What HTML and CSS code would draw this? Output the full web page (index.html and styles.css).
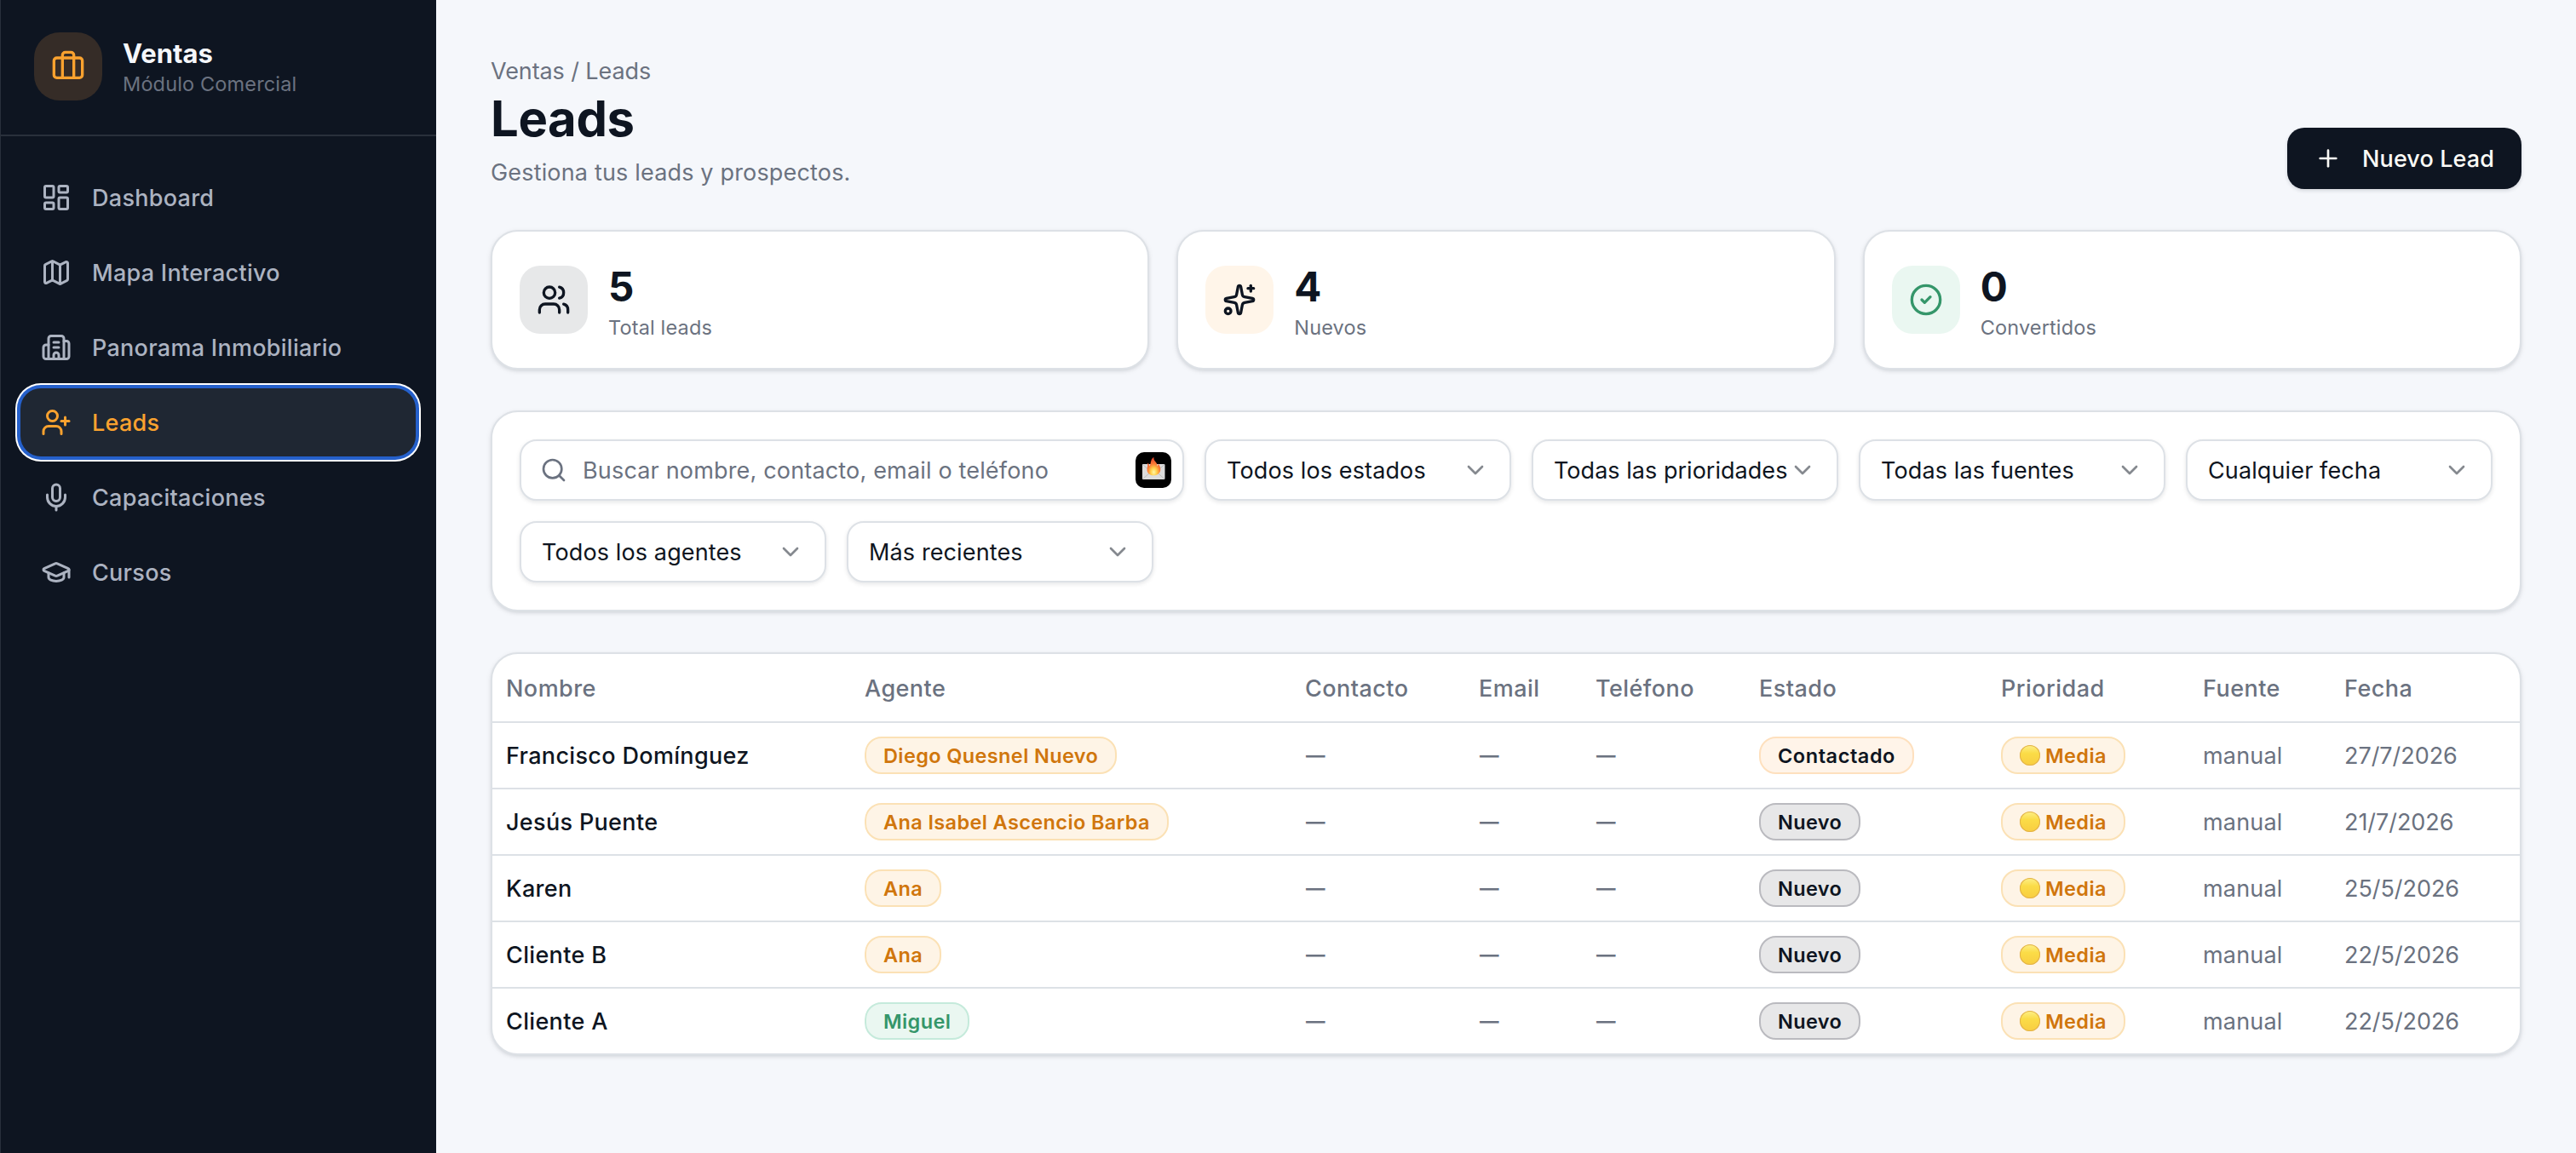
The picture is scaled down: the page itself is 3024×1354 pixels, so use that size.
FILE: index.html
```html
<!DOCTYPE html>
<html lang="es">
<head>
<meta charset="utf-8">
<title>Leads</title>
<link rel="stylesheet" href="styles.css">
</head>
<body>
<svg class="sprite" aria-hidden="true">
  <symbol id="chevron" viewBox="0 0 24 24"><path d="m6 9 6 6 6-6"/></symbol>
</svg>
<div class="app">
  <aside class="sidebar">
    <div class="brand">
      <div class="brand-icon">
        <svg class="icon icon-lg" viewBox="0 0 24 24"><path d="M16 20V4a2 2 0 0 0-2-2h-4a2 2 0 0 0-2 2v16"/><rect width="20" height="14" x="2" y="6" rx="2"/></svg>
      </div>
      <div class="brand-text">
        <div class="brand-name">Ventas</div>
        <div class="brand-sub">Módulo Comercial</div>
      </div>
    </div>
    <nav class="nav">
      <a class="nav-item"><svg class="icon icon-md" viewBox="0 0 24 24"><rect width="7" height="9" x="3" y="3" rx="1"/><rect width="7" height="5" x="14" y="3" rx="1"/><rect width="7" height="9" x="14" y="12" rx="1"/><rect width="7" height="5" x="3" y="16" rx="1"/></svg><span>Dashboard</span></a>
      <a class="nav-item"><svg class="icon icon-md" viewBox="0 0 24 24"><path d="M14.106 5.553a2 2 0 0 0 1.788 0l3.659-1.83A1 1 0 0 1 21 4.619v12.764a1 1 0 0 1-.553.894l-4.553 2.277a2 2 0 0 1-1.788 0l-4.212-2.106a2 2 0 0 0-1.788 0l-3.659 1.83A1 1 0 0 1 3 19.381V6.618a1 1 0 0 1 .553-.894l4.553-2.277a2 2 0 0 1 1.788 0z"/><path d="M15 5.764v15"/><path d="M9 3.236v15"/></svg><span>Mapa Interactivo</span></a>
      <a class="nav-item"><svg class="icon icon-md" viewBox="0 0 24 24"><path d="M10 12h4"/><path d="M10 8h4"/><path d="M14 21v-3a2 2 0 0 0-4 0v3"/><path d="M6 10H4a2 2 0 0 0-2 2v7a2 2 0 0 0 2 2h16a2 2 0 0 0 2-2V9a2 2 0 0 0-2-2h-2"/><path d="M6 21V5a2 2 0 0 1 2-2h8a2 2 0 0 1 2 2v16"/></svg><span>Panorama Inmobiliario</span></a>
      <a class="nav-item active"><svg class="icon icon-md" viewBox="0 0 24 24"><path d="M16 21v-2a4 4 0 0 0-4-4H6a4 4 0 0 0-4 4v2"/><circle cx="9" cy="7" r="4"/><path d="M19 8v6"/><path d="M22 11h-6"/></svg><span>Leads</span></a>
      <a class="nav-item"><svg class="icon icon-md" viewBox="0 0 24 24"><path d="M12 19v3"/><path d="M19 10v2a7 7 0 0 1-14 0v-2"/><rect x="9" y="2" width="6" height="13" rx="3"/></svg><span>Capacitaciones</span></a>
      <a class="nav-item"><svg class="icon icon-md" viewBox="0 0 24 24"><path d="M21.42 10.922a1 1 0 0 0-.019-1.838L12.83 5.18a2 2 0 0 0-1.66 0L2.6 9.08a1 1 0 0 0 0 1.832l8.57 3.908a2 2 0 0 0 1.66 0z"/><path d="M22 10v6"/><path d="M6 12.5V16a6 3 0 0 0 12 0v-3.5"/></svg><span>Cursos</span></a>
    </nav>
  </aside>

  <main class="main">
    <header class="page-header">
      <div>
        <div class="breadcrumb">Ventas / Leads</div>
        <h1 class="title">Leads</h1>
        <p class="subtitle">Gestiona tus leads y prospectos.</p>
      </div>
      <button class="btn-primary"><svg class="icon icon-sm" viewBox="0 0 24 24"><path d="M5 12h14"/><path d="M12 5v14"/></svg><span>Nuevo Lead</span></button>
    </header>

    <section class="stats">
      <div class="card stat">
        <div class="stat-icon neutral"><svg class="icon icon-lg" viewBox="0 0 24 24"><path d="M16 21v-2a4 4 0 0 0-4-4H6a4 4 0 0 0-4 4v2"/><path d="M16 3.128a4 4 0 0 1 0 7.744"/><path d="M22 21v-2a4 4 0 0 0-3-3.87"/><circle cx="9" cy="7" r="4"/></svg></div>
        <div class="stat-text"><div class="stat-value">5</div><div class="stat-label">Total leads</div></div>
      </div>
      <div class="card stat">
        <div class="stat-icon warm"><svg class="icon icon-lg" viewBox="0 0 24 24"><path d="M11.017 2.814a1 1 0 0 1 1.966 0l1.051 5.558a2 2 0 0 0 1.594 1.594l5.558 1.051a1 1 0 0 1 0 1.966l-5.558 1.051a2 2 0 0 0-1.594 1.594l-1.051 5.558a1 1 0 0 1-1.966 0l-1.051-5.558a2 2 0 0 0-1.594-1.594l-5.558-1.051a1 1 0 0 1 0-1.966l5.558-1.051a2 2 0 0 0 1.594-1.594z"/><path d="M20 2v4"/><path d="M22 4h-4"/><circle cx="4" cy="20" r="2"/></svg></div>
        <div class="stat-text"><div class="stat-value">4</div><div class="stat-label">Nuevos</div></div>
      </div>
      <div class="card stat">
        <div class="stat-icon success"><svg class="icon icon-lg" viewBox="0 0 24 24"><circle cx="12" cy="12" r="10"/><path d="m9 12 2 2 4-4"/></svg></div>
        <div class="stat-text"><div class="stat-value">0</div><div class="stat-label">Convertidos</div></div>
      </div>
    </section>

    <section class="card filters">
      <div class="field search">
        <svg class="icon icon-sm" viewBox="0 0 24 24"><path d="m21 21-4.34-4.34"/><circle cx="11" cy="11" r="8"/></svg>
        <span class="placeholder">Buscar nombre, contacto, email o teléfono</span>
        <svg class="mail-badge" viewBox="0 0 42 42">
          <defs>
            <radialGradient id="flame" cx="50%" cy="82%" r="75%"><stop offset="0" stop-color="#fff6a8"/><stop offset=".3" stop-color="#ffd04a"/><stop offset=".62" stop-color="#fb7a35"/><stop offset="1" stop-color="#e8482c"/></radialGradient>
          </defs>
          <rect width="42" height="42" rx="10" fill="#000"/>
          <rect x="8" y="14" width="26.5" height="18" rx="1" fill="#dcdcdc"/>
          <path d="M8.5 31.5 18 23M34 31.5 24.5 23M8.5 14.5l12.7 11 12.8-11" fill="none" stroke="#b9b9b9" stroke-width=".9"/>
          <path d="M21.3 27.3c-5 0-8-3-7.7-7.3.1-2.2 1-3.5.5-7.5 1.5 1 2 2.5 2.2 4 1.7-2.5 1.2-4.5 2.2-7 .6-1.7 1.7-2.8 3-3.5-.5 3 1.5 4.5 2.9 6.5 1 1.5 1 2.5 1 4 .9-.8 1.3-1.7 1.3-3 1.7 2 2.6 4.5 2.6 6.7 0 4.2-3.5 7.1-8 7.1z" fill="url(#flame)"/>
        </svg>
      </div>
      <div class="field select"><span>Todos los estados</span><svg class="icon icon-sm chevron"><use href="#chevron"/></svg></div>
      <div class="field select tight"><span>Todas las prioridades</span><svg class="icon icon-sm chevron"><use href="#chevron"/></svg></div>
      <div class="field select"><span>Todas las fuentes</span><svg class="icon icon-sm chevron"><use href="#chevron"/></svg></div>
      <div class="field select"><span>Cualquier fecha</span><svg class="icon icon-sm chevron"><use href="#chevron"/></svg></div>
      <div class="field select"><span>Todos los agentes</span><svg class="icon icon-sm chevron"><use href="#chevron"/></svg></div>
      <div class="field select"><span>Más recientes</span><svg class="icon icon-sm chevron"><use href="#chevron"/></svg></div>
    </section>

    <section class="card table-card">
      <table class="table">
        <colgroup><col class="c-name"><col class="c-agent"><col class="c-contact"><col class="c-email"><col class="c-phone"><col class="c-status"><col class="c-priority"><col class="c-source"><col></colgroup>
        <thead>
          <tr><th>Nombre</th><th>Agente</th><th>Contacto</th><th>Email</th><th>Teléfono</th><th>Estado</th><th>Prioridad</th><th>Fuente</th><th>Fecha</th></tr>
        </thead>
        <tbody>
          <tr><td class="name">Francisco Domínguez</td><td class="tag"><span class="badge amber">Diego Quesnel Nuevo</span></td><td class="dash">—</td><td class="dash">—</td><td class="dash">—</td><td class="tag"><span class="badge contacted">Contactado</span></td><td class="tag"><span class="badge amber"><i class="dot"></i>Media</span></td><td>manual</td><td class="date">27/7/2026</td></tr>
          <tr><td class="name">Jesús Puente</td><td class="tag"><span class="badge amber">Ana Isabel Ascencio Barba</span></td><td class="dash">—</td><td class="dash">—</td><td class="dash">—</td><td class="tag"><span class="badge new">Nuevo</span></td><td class="tag"><span class="badge amber"><i class="dot"></i>Media</span></td><td>manual</td><td class="date">21/7/2026</td></tr>
          <tr><td class="name">Karen</td><td class="tag"><span class="badge amber">Ana</span></td><td class="dash">—</td><td class="dash">—</td><td class="dash">—</td><td class="tag"><span class="badge new">Nuevo</span></td><td class="tag"><span class="badge amber"><i class="dot"></i>Media</span></td><td>manual</td><td class="date">25/5/2026</td></tr>
          <tr><td class="name">Cliente B</td><td class="tag"><span class="badge amber">Ana</span></td><td class="dash">—</td><td class="dash">—</td><td class="dash">—</td><td class="tag"><span class="badge new">Nuevo</span></td><td class="tag"><span class="badge amber"><i class="dot"></i>Media</span></td><td>manual</td><td class="date">22/5/2026</td></tr>
          <tr><td class="name">Cliente A</td><td class="tag"><span class="badge green">Miguel</span></td><td class="dash">—</td><td class="dash">—</td><td class="dash">—</td><td class="tag"><span class="badge new">Nuevo</span></td><td class="tag"><span class="badge amber"><i class="dot"></i>Media</span></td><td>manual</td><td class="date">22/5/2026</td></tr>
        </tbody>
      </table>
    </section>
  </main>
</div>
</body>
</html>
```
FILE: styles.css
```css
:root {
  --ink: #0e1521;
  --muted: #6b7280;
  --border: #dde1e6;
  --page: #f5f7fb;
  --orange: #faa22f;
}

* { box-sizing: border-box; }

body {
  margin: 0;
  background: var(--page);
  color: var(--ink);
  font-family: Inter, "Liberation Sans", sans-serif;
  font-size: 27px;
  line-height: 40px;
  letter-spacing: 0.17px;
}

.sprite { display: none; }

.icon {
  flex: none;
  fill: none;
  stroke: currentColor;
  stroke-width: 2;
  stroke-linecap: round;
  stroke-linejoin: round;
}
.icon-sm { width: 32px; height: 32px; }
.icon-md { width: 36px; height: 36px; }
.icon-lg { width: 40px; height: 40px; }

.app { display: flex; min-height: 1354px; }

/* Sidebar */
.sidebar {
  width: 512px;
  flex: none;
  background: var(--ink);
  box-shadow: inset 1px 0 #29303b;
}
.brand {
  display: flex;
  align-items: center;
  gap: 24px;
  height: 160px;
  padding: 0 40px 2px;
  border-bottom: 2px solid #29303b;
}
.brand-icon {
  display: grid;
  place-items: center;
  width: 80px;
  height: 80px;
  border-radius: 30px;
  background: #352c27;
  color: var(--orange);
}
.brand-text { padding-top: 2px; }
.brand-name {
  color: #f5f7fb;
  font-size: 31px;
  font-weight: 700;
  letter-spacing: 0;
}
.brand-sub {
  color: #6b7280;
  font-size: 23.5px;
  line-height: 32px;
  letter-spacing: 0.15px;
}
.nav {
  display: flex;
  flex-direction: column;
  gap: 8px;
  padding: 32px 24px;
}
.nav-item {
  display: flex;
  align-items: center;
  gap: 24px;
  height: 80px;
  padding: 0 24px;
  border-radius: 24px;
  color: #acb3c1;
  font-weight: 450;
  letter-spacing: 0.28px;
}
.nav-item.active {
  background: #1f2733;
  color: var(--orange);
  box-shadow: 0 0 0 4px #2560cb, 0 0 0 6px #fff;
}
.nav-item span,
.btn-primary span,
.field span { padding-top: 2px; }

/* Page */
.main {
  flex: 1;
  display: flex;
  flex-direction: column;
  gap: 48px;
  padding: 63px 64px 64px;
}
.page-header {
  display: flex;
  justify-content: space-between;
  align-items: flex-end;
  height: 159px;
}
.breadcrumb { color: var(--muted); letter-spacing: -0.1px; }
.title {
  margin: -1px 0 8px;
  font-size: 58px;
  font-weight: 700;
  line-height: 72px;
  letter-spacing: -0.4px;
}
.subtitle { margin: 0 0 -1px; color: var(--muted); }
.btn-primary {
  display: flex;
  align-items: center;
  gap: 24px;
  height: 72px;
  padding: 0 32px;
  border: 0;
  border-radius: 20px;
  background: var(--ink);
  color: #fbfaf6;
  font: inherit;
  font-weight: 500;
  letter-spacing: 0.1px;
  box-shadow: 0 2px 4px rgba(14, 21, 33, 0.14);
}

.card {
  border: 2px solid var(--border);
  border-radius: 32px;
  background: #fff;
  box-shadow: 0 2px 6px rgba(14, 21, 33, 0.08), 0 2px 4px -1px rgba(14, 21, 33, 0.1);
}

/* Stats */
.stats {
  display: grid;
  grid-template-columns: repeat(3, 1fr);
  gap: 32px;
}
.stat {
  display: flex;
  align-items: center;
  gap: 24px;
  height: 164px;
  padding: 0 32px;
}
.stat-icon {
  display: grid;
  place-items: center;
  width: 80px;
  height: 80px;
  border-radius: 24px;
}
.stat-icon.neutral { background: #e7e8e9; }
.stat-icon.warm { background: #fff5e9; }
.stat-icon.success { background: #eaf7f1; color: #35966a; }
.stat-text { padding-top: 2px; }
.stat-value { font-size: 47.5px; font-weight: 700; line-height: 64px; letter-spacing: 0; }
.stat-label { color: var(--muted); font-size: 23.5px; line-height: 32px; letter-spacing: 0.15px; }

/* Filters */
.filters {
  display: flex;
  flex-wrap: wrap;
  gap: 24px;
  padding: 32px;
}
.field {
  display: flex;
  align-items: center;
  height: 72px;
  border: 2px solid var(--border);
  border-radius: 20px;
  background: #fff;
  box-shadow: 0 2px 5px rgba(14, 21, 33, 0.1);
}
.search {
  flex: 1;
  gap: 18px;
  padding: 0 13px 0 22px;
  color: var(--muted);
}
.placeholder { flex: 1; white-space: nowrap; }
.mail-badge { width: 42px; height: 42px; }
.select {
  justify-content: space-between;
  width: 360px;
  padding: 0 24px;
  white-space: nowrap;
  letter-spacing: 0.12px;
}
.select.tight { letter-spacing: 0.03px; }
.select span { flex: 1; width: 0; }
.chevron { opacity: 0.5; }

/* Table */
.table-card { overflow: hidden; }
.table {
  width: 100%;
  table-layout: fixed;
  border-collapse: separate;
  border-spacing: 0;
}
.c-name { width: 421px; }
.c-agent { width: 517px; }
.c-contact { width: 204px; }
.c-email { width: 137px; }
.c-phone { width: 192px; }
.c-status { width: 284px; }
.c-priority { width: 237px; }
.c-source { width: 166px; }
.table th,
.table td {
  padding: 2px 16px 0;
  border-bottom: 2px solid var(--border);
  color: var(--muted);
  text-align: left;
  vertical-align: middle;
  white-space: nowrap;
}
.table th { height: 81px; font-weight: 450; letter-spacing: 0.45px; }
.table td { height: 78px; }
.table td.tag { padding-top: 0; }
.table tbody tr:last-child td { height: 76px; border-bottom: 0; }
.table .name { color: var(--ink); font-weight: 450; letter-spacing: 0.33px; }
.table .date { letter-spacing: -0.05px; }
.table .dash { padding: 0 17px; font-size: 22.5px; font-weight: 600; }

.badge {
  display: flex;
  align-items: center;
  width: fit-content;
  height: 44px;
  padding: 1px 20px 0;
  border: 2px solid;
  border-radius: 20px;
  font-size: 23.5px;
  font-weight: 600;
  line-height: 32px;
  letter-spacing: 0.38px;
}
.badge.amber { background: #fef4e6; border-color: #fbe1b5; color: #d0760c; }
.badge.green { background: #eaf7f1; border-color: #c5eadb; color: #35966a; }
.badge.contacted { background: #fff4e9; border-color: #fee0be; color: var(--ink); letter-spacing: 0.55px; }
.badge.new { background: #e7e7e8; border-color: #bababf; color: var(--ink); }
.dot {
  width: 24px;
  height: 24px;
  margin: -1px 6px 0 0;
  border-radius: 50%;
  background: linear-gradient(#fdf08a, #fbdc47 40%, #f8cd41);
  box-shadow: inset 0 0 0 1px #e2b04a;
}
```
